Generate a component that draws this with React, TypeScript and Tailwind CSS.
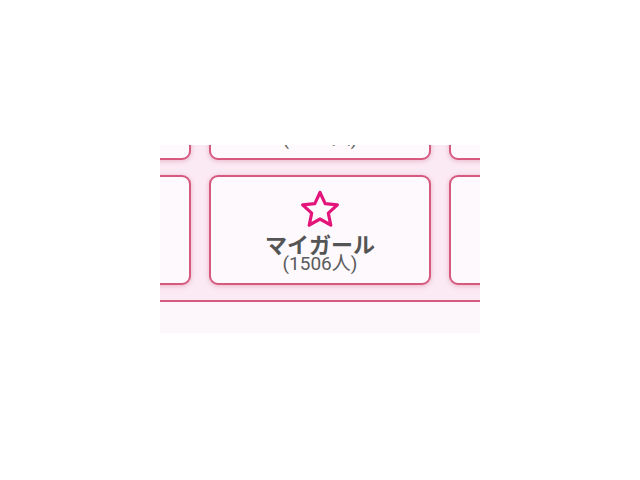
import React from "react";

function Star() {
  return (
    <svg width="42" height="40" viewBox="0 0 42 40" fill="none">
      <path
        d="M21 2.5 L26.2 13.6 L38.4 14.9 L29.3 23.1 L31.8 35.2 L21 29 L10.2 35.2 L12.7 23.1 L3.6 14.9 L15.8 13.6 Z"
        stroke="#e3157b"
        strokeWidth="3.2"
        strokeLinejoin="round"
      />
    </svg>
  );
}

function Card({ content }: { content?: boolean }) {
  return (
    <div className="w-[222px] h-[110px] shrink-0 rounded-[9px] border-2 border-[#d65a80] bg-[#fdf9fc] shadow-[0_1px_5px_rgba(200,80,120,0.35)] flex flex-col items-center pt-[13px]">
      {content && (
        <>
          <Star />
          <div
            className="text-[22px] leading-[22px] font-bold text-[#555555] mt-[2px]"
            style={{ fontFamily: '"Noto Sans CJK JP", "Noto Sans", sans-serif' }}
          >
            マイガール
          </div>
          <div
            className="text-[19px] leading-[20px] text-[#5c5c5c]"
            style={{ fontFamily: 'Roboto, "Noto Sans CJK JP", sans-serif' }}
          >
            (1506人)
          </div>
        </>
      )}
    </div>
  );
}

export default function App() {
  return (
    <div className="w-[640px] h-[480px] bg-white">
      <div className="mx-[160px] pt-[145px]">
        <div className="w-[320px] h-[188px] overflow-hidden bg-[#fbeaf3] relative">
          <div className="flex flex-col gap-[15px] mt-[-95px] ml-[-191px]">
            <div className="flex gap-[18px]">
              <Card content />
              <Card content />
              <Card content />
            </div>
            <div className="flex gap-[18px]">
              <Card />
              <Card content />
              <Card />
            </div>
          </div>
          <div className="mt-[15px] h-[2px] bg-[#d65a80]" />
          <div className="h-[40px] bg-[#fdf7fb]" />
        </div>
      </div>
    </div>
  );
}
